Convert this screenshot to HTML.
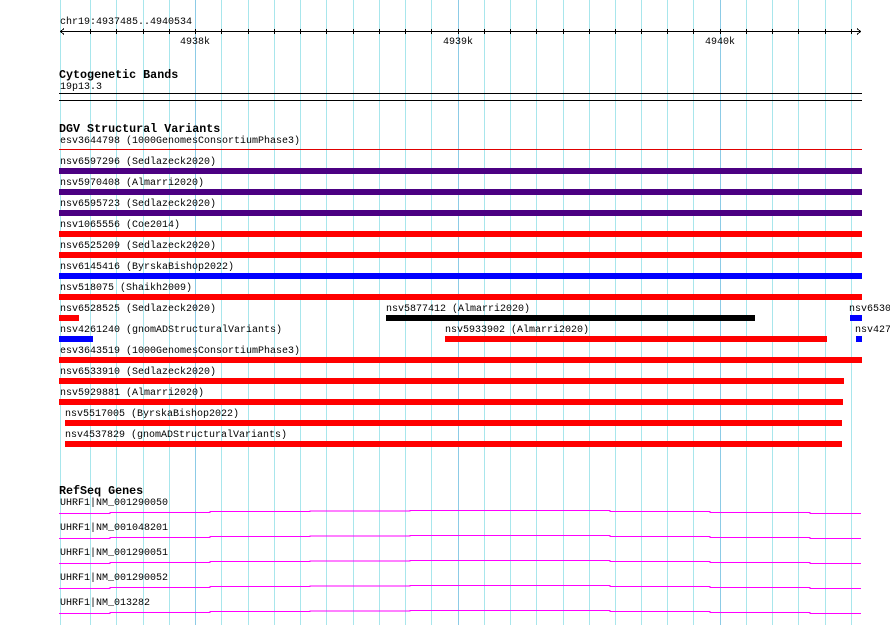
<!DOCTYPE html>
<html><head><meta charset="utf-8"><style>
html,body{margin:0;padding:0;background:#fff;width:890px;height:625px;overflow:hidden}
svg text{font-family:"Liberation Mono",monospace;font-size:10px;fill:#000}
svg text.b{font-weight:bold;font-size:11.7px}
</style></head><body>
<svg width="890" height="625" viewBox="0 0 890 625" xmlns="http://www.w3.org/2000/svg" shape-rendering="crispEdges">
<g id="grid" stroke="#a8e6ec" stroke-width="1">
<line x1="60.5" y1="0" x2="60.5" y2="625"/>
<line x1="90.5" y1="0" x2="90.5" y2="625"/>
<line x1="116.5" y1="0" x2="116.5" y2="625"/>
<line x1="143.5" y1="0" x2="143.5" y2="625"/>
<line x1="169.5" y1="0" x2="169.5" y2="625"/>
<line x1="195.5" y1="0" x2="195.5" y2="625" stroke="#8ccbe6"/>
<line x1="221.5" y1="0" x2="221.5" y2="625"/>
<line x1="248.5" y1="0" x2="248.5" y2="625"/>
<line x1="274.5" y1="0" x2="274.5" y2="625"/>
<line x1="300.5" y1="0" x2="300.5" y2="625"/>
<line x1="326.5" y1="0" x2="326.5" y2="625"/>
<line x1="353.5" y1="0" x2="353.5" y2="625"/>
<line x1="379.5" y1="0" x2="379.5" y2="625"/>
<line x1="405.5" y1="0" x2="405.5" y2="625"/>
<line x1="431.5" y1="0" x2="431.5" y2="625"/>
<line x1="458.5" y1="0" x2="458.5" y2="625" stroke="#8ccbe6"/>
<line x1="484.5" y1="0" x2="484.5" y2="625"/>
<line x1="510.5" y1="0" x2="510.5" y2="625"/>
<line x1="536.5" y1="0" x2="536.5" y2="625"/>
<line x1="563.5" y1="0" x2="563.5" y2="625"/>
<line x1="589.5" y1="0" x2="589.5" y2="625"/>
<line x1="615.5" y1="0" x2="615.5" y2="625"/>
<line x1="641.5" y1="0" x2="641.5" y2="625"/>
<line x1="667.5" y1="0" x2="667.5" y2="625"/>
<line x1="693.5" y1="0" x2="693.5" y2="625"/>
<line x1="720.5" y1="0" x2="720.5" y2="625" stroke="#8ccbe6"/>
<line x1="746.5" y1="0" x2="746.5" y2="625"/>
<line x1="772.5" y1="0" x2="772.5" y2="625"/>
<line x1="798.5" y1="0" x2="798.5" y2="625"/>
<line x1="825.5" y1="0" x2="825.5" y2="625"/>
<line x1="851.5" y1="0" x2="851.5" y2="625"/>
</g>
<text x="60" y="24">chr19:4937485..4940534</text>
<g stroke="#000" stroke-width="1">
<line x1="60" y1="31.5" x2="861" y2="31.5"/>
<polyline points="64,28.5 60.5,31.5 64,34.5" fill="none"/>
<polyline points="857,28.5 860.5,31.5 857,34.5" fill="none"/>
<line x1="90.5" y1="29" x2="90.5" y2="34"/><line x1="116.5" y1="29" x2="116.5" y2="34"/><line x1="143.5" y1="29" x2="143.5" y2="34"/><line x1="169.5" y1="29" x2="169.5" y2="34"/><line x1="195.5" y1="29" x2="195.5" y2="34"/><line x1="221.5" y1="29" x2="221.5" y2="34"/><line x1="248.5" y1="29" x2="248.5" y2="34"/><line x1="274.5" y1="29" x2="274.5" y2="34"/><line x1="300.5" y1="29" x2="300.5" y2="34"/><line x1="326.5" y1="29" x2="326.5" y2="34"/><line x1="353.5" y1="29" x2="353.5" y2="34"/><line x1="379.5" y1="29" x2="379.5" y2="34"/><line x1="405.5" y1="29" x2="405.5" y2="34"/><line x1="431.5" y1="29" x2="431.5" y2="34"/><line x1="458.5" y1="29" x2="458.5" y2="34"/><line x1="484.5" y1="29" x2="484.5" y2="34"/><line x1="510.5" y1="29" x2="510.5" y2="34"/><line x1="536.5" y1="29" x2="536.5" y2="34"/><line x1="563.5" y1="29" x2="563.5" y2="34"/><line x1="589.5" y1="29" x2="589.5" y2="34"/><line x1="615.5" y1="29" x2="615.5" y2="34"/><line x1="641.5" y1="29" x2="641.5" y2="34"/><line x1="667.5" y1="29" x2="667.5" y2="34"/><line x1="693.5" y1="29" x2="693.5" y2="34"/><line x1="720.5" y1="29" x2="720.5" y2="34"/><line x1="746.5" y1="29" x2="746.5" y2="34"/><line x1="772.5" y1="29" x2="772.5" y2="34"/><line x1="798.5" y1="29" x2="798.5" y2="34"/><line x1="825.5" y1="29" x2="825.5" y2="34"/><line x1="851.5" y1="29" x2="851.5" y2="34"/>
</g>
<text x="180" y="44">4938k</text>
<text x="443" y="44">4939k</text>
<text x="705" y="44">4940k</text>
<text class="b" x="59" y="78">Cytogenetic Bands</text>
<text x="60" y="89">19p13.3</text>
<line x1="59" y1="93.5" x2="862" y2="93.5" stroke="#000"/>
<line x1="59" y1="100.5" x2="862" y2="100.5" stroke="#000"/>
<text class="b" x="59" y="132">DGV Structural Variants</text>
<text x="60" y="143">esv3644798 (1000GenomesConsortiumPhase3)</text>
<line x1="59" y1="149.5" x2="862" y2="149.5" stroke="#e00000"/>
<text x="60" y="164">nsv6597296 (Sedlazeck2020)</text>
<rect x="59" y="168" width="803" height="6" fill="#4b0082"/>
<text x="60" y="185">nsv5970408 (Almarri2020)</text>
<rect x="59" y="189" width="803" height="6" fill="#4b0082"/>
<text x="60" y="206">nsv6595723 (Sedlazeck2020)</text>
<rect x="59" y="210" width="803" height="6" fill="#4b0082"/>
<text x="60" y="227">nsv1065556 (Coe2014)</text>
<rect x="59" y="231" width="803" height="6" fill="#ff0000"/>
<text x="60" y="248">nsv6525209 (Sedlazeck2020)</text>
<rect x="59" y="252" width="803" height="6" fill="#ff0000"/>
<text x="60" y="269">nsv6145416 (ByrskaBishop2022)</text>
<rect x="59" y="273" width="803" height="6" fill="#0000ff"/>
<text x="60" y="290">nsv518075 (Shaikh2009)</text>
<rect x="59" y="294" width="803" height="6" fill="#ff0000"/>
<text x="60" y="311">nsv6528525 (Sedlazeck2020)</text>
<rect x="59" y="315" width="20" height="6" fill="#ff0000"/>
<text x="386" y="311">nsv5877412 (Almarri2020)</text>
<rect x="386" y="315" width="369" height="6" fill="#000"/>
<text x="849" y="311">nsv6530</text>
<rect x="850" y="315" width="12" height="6" fill="#0000ff"/>
<text x="60" y="332">nsv4261240 (gnomADStructuralVariants)</text>
<rect x="59" y="336" width="34" height="6" fill="#0000ff"/>
<text x="445" y="332">nsv5933902 (Almarri2020)</text>
<rect x="445" y="336" width="382" height="6" fill="#ff0000"/>
<text x="855" y="332">nsv427</text>
<rect x="856" y="336" width="6" height="6" fill="#0000ff"/>
<text x="60" y="353">esv3643519 (1000GenomesConsortiumPhase3)</text>
<rect x="59" y="357" width="803" height="6" fill="#ff0000"/>
<text x="60" y="374">nsv6533910 (Sedlazeck2020)</text>
<rect x="59" y="378" width="785" height="6" fill="#ff0000"/>
<text x="60" y="395">nsv5929881 (Almarri2020)</text>
<rect x="59" y="399" width="784" height="6" fill="#ff0000"/>
<text x="65" y="416">nsv5517005 (ByrskaBishop2022)</text>
<rect x="65" y="420" width="777" height="6" fill="#ff0000"/>
<text x="65" y="437">nsv4537829 (gnomADStructuralVariants)</text>
<rect x="65" y="441" width="777" height="6" fill="#ff0000"/>
<text class="b" x="59" y="494">RefSeq Genes</text>
<g fill="none" stroke="#ff00ff" stroke-width="1">
<polyline points="59,513.5 110,513.5 110,512.5 210,512.5 210,511.5 310,511.5 310,511 410,511 410,510.5 610,510.5 610,511.5 710,511.5 710,512.5 810,512.5 810,513.5 861,513.5"/>
<polyline points="59,538.5 110,538.5 110,537.5 210,537.5 210,536.5 310,536.5 310,536 410,536 410,535.5 610,535.5 610,536.5 710,536.5 710,537.5 810,537.5 810,538.5 861,538.5"/>
<polyline points="59,563.5 110,563.5 110,562.5 210,562.5 210,561.5 310,561.5 310,561 410,561 410,560.5 610,560.5 610,561.5 710,561.5 710,562.5 810,562.5 810,563.5 861,563.5"/>
<polyline points="59,588.5 110,588.5 110,587.5 210,587.5 210,586.5 310,586.5 310,586 410,586 410,585.5 610,585.5 610,586.5 710,586.5 710,587.5 810,587.5 810,588.5 861,588.5"/>
<polyline points="59,613.5 110,613.5 110,612.5 210,612.5 210,611.5 310,611.5 310,611 410,611 410,610.5 610,610.5 610,611.5 710,611.5 710,612.5 810,612.5 810,613.5 861,613.5"/>
</g>
<text x="60" y="505">UHRF1|NM_001290050</text>
<text x="60" y="530">UHRF1|NM_001048201</text>
<text x="60" y="555">UHRF1|NM_001290051</text>
<text x="60" y="580">UHRF1|NM_001290052</text>
<text x="60" y="605">UHRF1|NM_013282</text>
</svg>
</body></html>
